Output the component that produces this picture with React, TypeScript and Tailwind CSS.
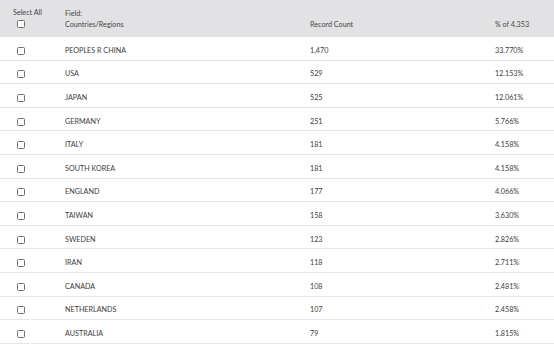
const ROWS = [
  { name: "PEOPLES R CHINA", count: "1,470", pct: "33.770%" },
  { name: "USA", count: "529", pct: "12.153%" },
  { name: "JAPAN", count: "525", pct: "12.061%" },
  { name: "GERMANY", count: "251", pct: "5.766%" },
  { name: "ITALY", count: "181", pct: "4.158%" },
  { name: "SOUTH KOREA", count: "181", pct: "4.158%" },
  { name: "ENGLAND", count: "177", pct: "4.066%" },
  { name: "TAIWAN", count: "158", pct: "3.630%" },
  { name: "SWEDEN", count: "123", pct: "2.826%" },
  { name: "IRAN", count: "118", pct: "2.711%" },
  { name: "CANADA", count: "108", pct: "2.481%" },
  { name: "NETHERLANDS", count: "107", pct: "2.458%" },
  { name: "AUSTRALIA", count: "79", pct: "1.815%" },
];

function Checkbox() {
  return <span className="block h-[8px] w-[8px] rounded-[1.5px] border border-[#707070] bg-white" />;
}

export default function App() {
  return (
    <div className="h-[346px] w-[554px] overflow-hidden bg-white font-['Lato',sans-serif] text-[7.2px] text-[#3c3c3c]">
      <div className="flex h-[37px] bg-[#e2e2e5] text-[#444]">
        <div className="flex w-[65px] flex-col pl-[13px] pt-[8px]">
          <span className="leading-[10px]">Select All</span>
          <span className="mt-[2px] ml-[4px]">
            <Checkbox />
          </span>
        </div>
        <div className="flex w-[245px] flex-col pt-[8px] leading-[11px]">
          <span>Field:</span>
          <span>Countries/Regions</span>
        </div>
        <div className="w-[185px] pt-[19px] leading-[11px]">Record Count</div>
        <div className="flex-1 pt-[19px] leading-[11px]">% of 4,353</div>
      </div>
      {ROWS.map((row) => (
        <div key={row.name} className="flex h-[23.6px] items-center border-b border-[#e6e6e6] pt-[5px] leading-[10px]">
          <div className="w-[65px] pl-[17px]">
            <Checkbox />
          </div>
          <div className="w-[245px]">{row.name}</div>
          <div className="w-[185px]">{row.count}</div>
          <div className="flex-1">{row.pct}</div>
        </div>
      ))}
    </div>
  );
}
